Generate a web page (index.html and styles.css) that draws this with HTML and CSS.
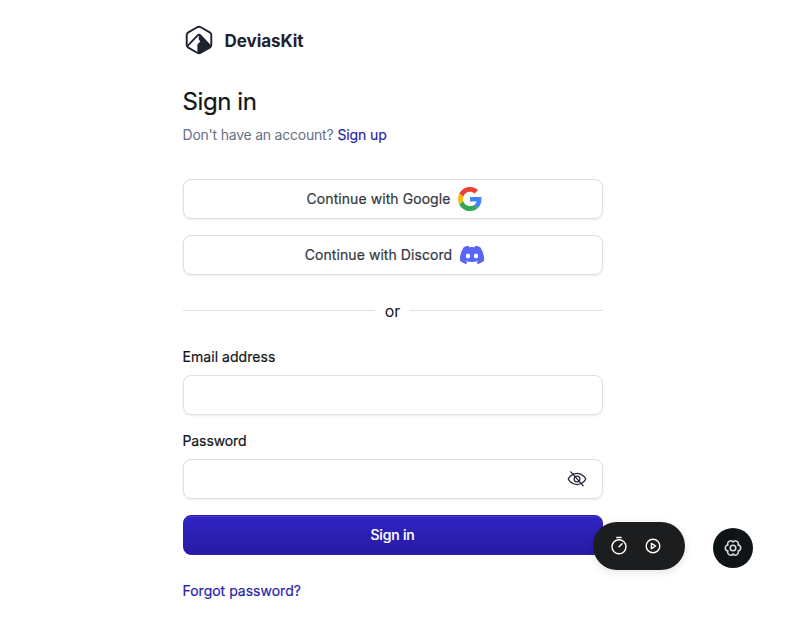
FILE: index.html
```html
<!DOCTYPE html>
<html lang="en">
<head>
<meta charset="utf-8">
<title>Sign in | DeviasKit</title>
<link rel="stylesheet" href="styles.css">
</head>
<body>
<main class="auth">
  <a class="logo" href="#">
    <svg width="32" height="32" viewBox="0 0 32 32" aria-hidden="true">
      <path d="M14.2 3.3 5.3 8.4Q3.7 9.3 3.7 11.1v9.8q0 1.8 1.6 2.7l8.9 5.1q1.8 1 3.6 0l8.9-5.1q1.6-.9 1.6-2.7v-9.8q0-1.8-1.6-2.7l-8.9-5.1q-1.8-1-3.6 0Z" fill="none" stroke="#1e2231" stroke-width="1.9"/>
      <path d="m4.6 21.9 10-10.5q1.4-1.4 2.8 0l10 10.5" fill="none" stroke="#1e2231" stroke-width="1.8"/>
      <path d="M16 10.8 28.2 22.2 17.5 29 14.4 28.9V20.5L17.2 17.5 15.6 15Z" fill="#1e2231"/>
    </svg>
    <span class="brand">DeviasKit</span>
  </a>
  <h1 class="title">Sign in</h1>
  <p class="subtitle"><span class="question">Don't have an account?</span> <a class="signup" href="#">Sign up</a></p>
  <div class="providers">
    <button class="provider google" type="button"><span>Continue with Google</span>
      <svg width="24" height="24" viewBox="0 0 48 48" aria-hidden="true">
        <path fill="#ea4335" d="M24 9.5c3.54 0 6.71 1.22 9.21 3.6l6.85-6.85C35.9 2.38 30.47 0 24 0 14.62 0 6.51 5.38 2.56 13.22l7.98 6.19C12.43 13.72 17.74 9.5 24 9.5z"/>
        <path fill="#4285f4" d="M46.98 24.55c0-1.57-.15-3.09-.38-4.55H24v9.02h12.94c-.58 2.96-2.26 5.48-4.78 7.18l7.73 6c4.51-4.18 7.09-10.36 7.09-17.65z"/>
        <path fill="#fbbc05" d="M10.53 28.59c-.48-1.45-.76-2.99-.76-4.59s.27-3.14.76-4.59l-7.98-6.19C.92 16.46 0 20.12 0 24c0 3.88.92 7.54 2.56 10.78l7.97-6.19z"/>
        <path fill="#34a853" d="M24 48c6.48 0 11.93-2.13 15.89-5.81l-7.73-6c-2.15 1.45-4.92 2.3-8.16 2.3-6.26 0-11.57-4.22-13.47-9.91l-7.98 6.19C6.51 42.62 14.62 48 24 48z"/>
      </svg>
    </button>
    <button class="provider discord" type="button"><span>Continue with Discord</span>
      <svg width="24" height="24" viewBox="0 0 24 24" aria-hidden="true">
        <path fill="#5865f2" d="M20.317 4.37a19.79 19.79 0 0 0-4.885-1.515.074.074 0 0 0-.079.037c-.21.375-.444.864-.608 1.25a18.27 18.27 0 0 0-5.487 0 12.64 12.64 0 0 0-.617-1.25.077.077 0 0 0-.079-.037A19.736 19.736 0 0 0 3.677 4.37a.07.07 0 0 0-.032.027C.533 9.046-.32 13.58.099 18.057a.082.082 0 0 0 .031.057 19.9 19.9 0 0 0 5.993 3.03.078.078 0 0 0 .084-.028c.462-.63.874-1.295 1.226-1.994a.076.076 0 0 0-.041-.106 13.1 13.1 0 0 1-1.872-.892.077.077 0 0 1-.008-.128c.126-.094.252-.192.372-.291a.074.074 0 0 1 .077-.01c3.928 1.793 8.18 1.793 12.062 0a.074.074 0 0 1 .078.009c.12.099.246.198.373.292a.077.077 0 0 1-.006.127 12.3 12.3 0 0 1-1.873.892.077.077 0 0 0-.041.107c.36.698.772 1.362 1.225 1.993a.076.076 0 0 0 .084.028 19.84 19.84 0 0 0 6.002-3.03.077.077 0 0 0 .032-.054c.5-5.177-.838-9.674-3.549-13.66a.06.06 0 0 0-.031-.03zM8.02 15.33c-1.183 0-2.157-1.085-2.157-2.419 0-1.333.956-2.419 2.157-2.419 1.21 0 2.176 1.095 2.157 2.42 0 1.333-.956 2.418-2.157 2.418zm7.975 0c-1.183 0-2.157-1.085-2.157-2.419 0-1.333.955-2.419 2.157-2.419 1.21 0 2.176 1.095 2.157 2.42 0 1.333-.946 2.418-2.157 2.418z"/>
      </svg>
    </button>
  </div>
  <div class="divider"><span>or</span></div>
  <form class="form">
    <div class="field">
      <label class="label-email" for="email">Email address</label>
      <div class="control"><input id="email" type="email"></div>
    </div>
    <div class="field">
      <label class="label-password" for="password">Password</label>
      <div class="control"><input id="password" type="password">
        <svg class="eye" width="20" height="20" viewBox="0 0 256 256" aria-hidden="true">
          <path d="M128 56C48 56 16 128 16 128s32 72 112 72 112-72 112-72-32-72-112-72Z"/><circle cx="128" cy="128" r="37"/><path d="m48 36 160 180"/>
        </svg>
      </div>
    </div>
    <button class="submit" type="button">Sign in</button>
  </form>
  <a class="forgot" href="#">Forgot password?</a>
</main>
<div class="toolbar">
  <svg width="20" height="20" viewBox="0 0 20 20" aria-hidden="true"><circle cx="10" cy="10.8" r="7"/><path d="M7.8 1.5h4.4M10 10.8l3.1-3.1"/></svg>
  <svg width="20" height="20" viewBox="0 0 20 20" aria-hidden="true"><circle cx="10" cy="10" r="6.8"/><path d="m8.4 7.4 4.2 2.6-4.2 2.6Z"/></svg>
</div>
<button class="settings" type="button" aria-label="Settings">
  <svg width="20" height="20" viewBox="0 0 20 20" aria-hidden="true"><circle cx="10" cy="10" r="2.8"/><path d="M10 4.2C11.8 1.1 16.8 4 15 7.1 18.6 7.1 18.6 12.9 15 12.9 16.8 16 11.8 18.9 10 15.8 8.2 18.9 3.2 16 5 12.9 1.4 12.9 1.4 7.1 5 7.1 3.2 4 8.2 1.1 10 4.2Z"/></svg>
</button>
</body>
</html>
```

FILE: styles.css
```css
* { box-sizing: border-box; }
body { margin: 0; background: #fff; color: #121517; font-family: Inter, sans-serif; font-size: 14px; }
a { color: #2a1fa8; text-decoration: none; }
button { font: inherit; }
.auth { display: flex; flex-direction: column; width: 420px; margin: 0 auto; padding-top: 24px; }
.logo { display: flex; align-items: center; gap: 10px; height: 32px; color: #1e2231; }
.brand { padding-top: 1px; font-size: 17px; font-weight: 700; letter-spacing: -.05px; }
.title { margin: 32px 0 0; font-size: 24px; font-weight: 400; line-height: 28px; letter-spacing: -.4px; -webkit-text-stroke: .2px; }
.subtitle { display: flex; gap: 4px; margin: 8px 0 0; line-height: 22px; color: #667085; }
.question { letter-spacing: -.22px; }
.signup, .provider, label, .forgot { font-weight: 400; -webkit-text-stroke: .2px; }
.signup { letter-spacing: -.1px; }
.providers { display: grid; gap: 16px; margin-top: 33px; }
.provider { display: flex; align-items: center; justify-content: center; gap: 8px; height: 40px; padding: 0 0 2px 4px; border: 1px solid #dcdfe4; border-radius: 8px; background: #fff; color: #32383e; letter-spacing: .07px; box-shadow: 0 1px 2px rgba(0,0,0,.08); }
.provider svg { position: relative; top: 1px; }
.divider { display: flex; align-items: center; gap: 10px; height: 23px; margin: 24px 0 25px; font-size: 16px; }
.divider::before, .divider::after { content: ""; flex: 1; height: 1px; background: #dcdfe4; }
.form { display: grid; gap: 16px; }
.field { display: grid; gap: 8px; }
label { line-height: 20px; letter-spacing: .05px; }
.label-password { letter-spacing: -.1px; }
.control { display: flex; align-items: center; height: 40px; padding: 0 15px 0 14px; border: 1px solid #dcdfe4; border-radius: 8px; box-shadow: 0 1px 2px rgba(0,0,0,.08); }
input { flex: 1; min-width: 0; border: 0; outline: 0; background: none; font: inherit; }
.eye { fill: none; stroke: #212636; stroke-width: 16; stroke-linecap: round; }
.submit { height: 40px; padding: 0 0 2px; border: 1px solid #2a1fa8; border-radius: 8px; background: linear-gradient(#2f24c3, #271ba4); color: #fff; font-weight: 500; letter-spacing: -.2px; -webkit-text-stroke: .15px; box-shadow: inset 0 1px rgba(255,255,255,.12); }
.forgot { align-self: flex-start; margin-top: 25px; line-height: 22px; letter-spacing: 0; }
.toolbar { position: fixed; left: 593px; top: 522px; display: flex; align-items: center; justify-content: center; gap: 14px; width: 92px; height: 48px; padding-right: 6px; border-radius: 24px; background: #1b1d1f; box-shadow: 0 2px 8px rgba(0,0,0,.12); }
.toolbar svg { fill: none; stroke: #fff; stroke-width: 1.4; stroke-linecap: round; stroke-linejoin: round; }
.settings { position: fixed; left: 713px; top: 528px; display: grid; place-items: center; width: 40px; height: 40px; padding: 0; border: 0; border-radius: 50%; background: #0f1417; }
.settings svg { fill: none; stroke: #d9dde0; stroke-width: 1.5; stroke-linejoin: round; }
```
